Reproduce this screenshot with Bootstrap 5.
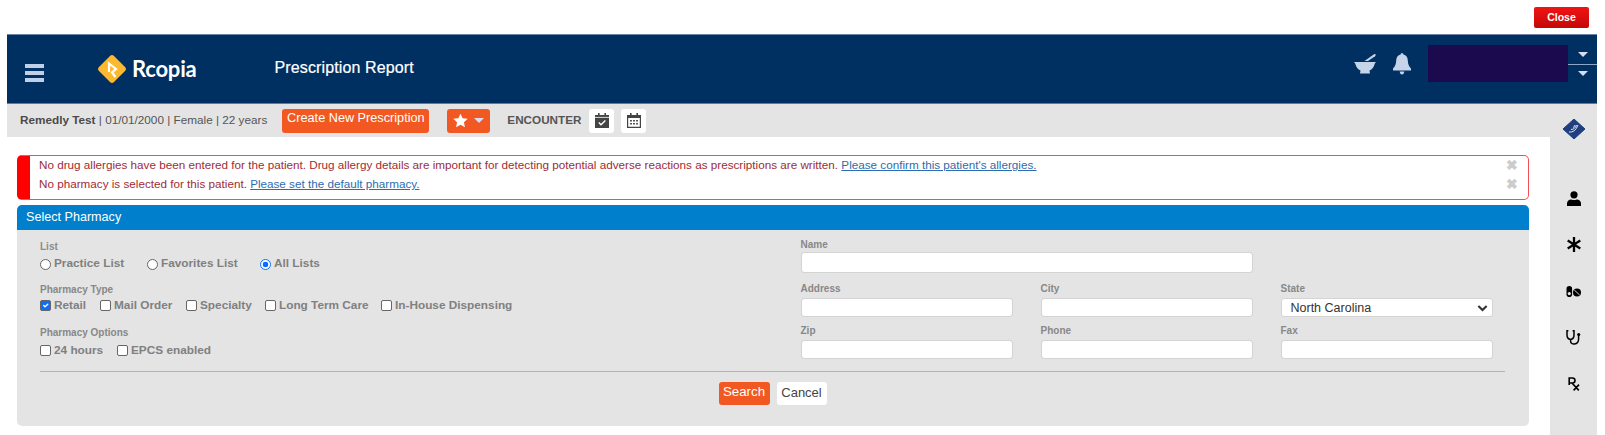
<!DOCTYPE html>
<html lang="en">
<head>
<meta charset="utf-8">
<title>Prescription Report</title>
<link href="https://cdn.jsdelivr.net/npm/bootstrap@5.3.0/dist/css/bootstrap.min.css" rel="stylesheet">
<style>
html,body{height:435px;overflow:hidden;background:#fff;font-family:"Liberation Sans",Arial,sans-serif;}
.shell{padding:0 8px 0 7px;}
.topstrip{height:34px;padding-right:8px;}
.closer{width:55px;height:21px;padding:0;font-size:10.5px;font-weight:700;color:#fff;border:0;border-radius:2px;background:linear-gradient(#f01414,#c40808);line-height:21px;}
.headbar{height:70px;background:#002f62;border-top:1px solid #6d86a8;border-bottom:1px solid #5f7a9e;}
.burger{width:19px;margin:7px 0 0 18px;}
.burger span{display:block;height:4px;margin-bottom:3px;background:#bfcfe8;}
.burger span:last-child{margin-bottom:0;}
.brand{margin:0 0 0 53px;gap:5px;}
.brandword{font-family:Lato,sans-serif;font-weight:700;font-size:22px;color:#fff;line-height:1;letter-spacing:-.2px;}
.reporttitle{margin:0 0 3px 78px;font-size:16px;color:#fff;font-weight:400;letter-spacing:.12px;-webkit-text-stroke:.2px #fff;}
.headtools{gap:17px;padding-bottom:11px;}
.redact{width:140px;height:37px;background:#1c0a4f;}
.userarrows{width:29px;height:37px;}
.userarrows div{height:20px;border-bottom:1px solid #8fa6c6;}
.userarrows div+div{border-bottom:0;height:17px;}
.downtri{width:0;height:0;border-left:5px solid transparent;border-right:5px solid transparent;border-top:5px solid #d4def0;}
.mainrow{height:331px;}
.sidecol{width:47px;background:#e4e4e4;padding-top:3px;}
.sideslot{height:46.5px;}
.sideslot.firstslot{height:68px;padding-bottom:24px;}
.toolstrip{height:33px;background:#e4e4e4;padding-left:13px;color:#555;font-size:11.75px;gap:0;}
.toolstrip>span{padding-bottom:2px;}
.toolstrip b{color:#4a4a4a;}
.orangebtn{background:#f25822;color:#fff;border:0;border-radius:3px;font-size:12.7px;line-height:1;padding:0;height:24px;}
.orangebtn:hover{background:#f25822;color:#fff;}
.newrx{width:147px;margin-left:15px;padding-bottom:4px;}
.starbtn{width:43px;margin-left:18px;gap:6px;}
.encword{font-weight:700;color:#555;margin:0 8px 0 17px;font-size:11.7px;}
.calbtn{width:25px;height:24px;background:#fff;border-radius:3px;margin-right:7px;}
.pagebody{padding:18px 21px 0 10px;}
.warnbox{height:45px;margin:0 0 5px;padding:0;border:1px solid #f44b55;border-left:13px solid #f00;border-radius:5px;background:#fff;color:#a02c36;font-size:11.7px;}
.warnline{height:19px;padding:0 10px 1px 9px;}
.warnline a{color:#2d6cb0;}
.warnx{color:#ccc;font-size:14px;font-weight:700;line-height:1;}
.panelcard{height:221px;border:0;border-radius:5px;background:#e4e4e4;}
.panelhead{height:25px;padding:0 9px;background:#0080cc;border:0;color:#fff;font-size:12.6px;line-height:25px;border-radius:5px 5px 0 0!important;}
.panelbody{padding:8px 24px 0 23px;}
.formsplit{display:grid;grid-template-columns:760.5px 1fr;height:126px;}
.grouptitle{display:block;height:14px;line-height:14px;margin:0 0 2px;font-size:10px;font-weight:700;color:#888;}
.grouptitle.listt{margin-top:2px;color:#8c8c8c;}
.grouptitle.typet{margin-bottom:1px;}
.grouptitle.optt{margin-bottom:3px;}
.optrow{height:16px;margin-bottom:11px;}
.optrow.typerow{margin-bottom:12px;}
.optitem{display:flex;align-items:center;margin:0;font-size:11.8px;font-weight:700;color:#808080;}
.optitem .form-check-input{width:11px;height:11px;margin:0 3px 0 0;border:1px solid #666;flex:none;}
.optitem .form-check-input[type=checkbox]{border-radius:2px;margin-bottom:2px;}
.optitem .form-check-input[type=radio]:checked{border-color:#0d6efd;background-color:#fff;background-image:radial-gradient(circle,#0d6efd 0 2.6px,#fff 3.1px);}
.rightgrid{display:grid;grid-template-columns:repeat(3,212px);column-gap:28px;}
.fieldspan{grid-column:span 2;}
.fieldname{height:36px;margin-bottom:8px;}
.fieldaddr{height:36px;margin-bottom:6px;}
.fieldtitle{display:block;height:14px;line-height:14px;margin:0;font-size:10px;font-weight:700;color:#888;}
.fieldaddr .fieldtitle,.fieldzip .fieldtitle{margin-bottom:2px;}
.tallinput{height:21px;min-height:0;padding:0 8px;border:1px solid #d4d4d4;border-radius:3px;font-size:12px;}
.shortinput{height:19px;min-height:0;padding:0 9px;border:1px solid #d4d4d4;border-radius:3px;font-size:12.5px;color:#333;}
select.shortinput{background-size:11px 8px;background-position:right 4px center;background-image:url("data:image/svg+xml,%3csvg xmlns='http://www.w3.org/2000/svg' viewBox='0 0 16 10'%3e%3cpath fill='none' stroke='%23333' stroke-width='3' d='M2 2l6 6 6-6'/%3e%3c/svg%3e");}
.formrule{margin:7px 0 10px;border:0;border-top:1px solid #b4b4b4;opacity:1;}
.searchbtn{width:51px;height:23px;font-size:13.3px;padding-bottom:3px;}
.cancelbtn{width:50px;height:23px;padding:0 0 3px;margin-left:7px;background:#fff;color:#444;border:0;border-radius:3px;font-size:13px;line-height:1;}
</style>
</head>
<body>
<div class="shell">
  <div class="topstrip d-flex justify-content-end align-items-center">
    <button type="button" class="btn closer">Close</button>
  </div>

  <nav class="headbar d-flex align-items-center">
    <div class="burger"><span></span><span></span><span></span></div>
    <div class="brand d-flex align-items-center">
      <svg width="30" height="30" viewBox="0 0 30 30" aria-hidden="true">
        <path d="M15 1 Q16 1 17 2 L28 13 Q30 15 28 17 L17 28 Q15 30 13 28 L2 17 Q0 15 2 13 L13 2 Q14 1 15 1Z" fill="#fdb92e"/>
        <path d="M12 18 V9.5 L19 15 L15 18.5 L18.5 23" fill="none" stroke="#fff" stroke-width="2.2" stroke-linejoin="miter"/>
      </svg>
      <span class="brandword">Rcopia</span>
    </div>
    <div class="reporttitle">Prescription Report</div>
    <div class="headtools d-flex align-items-center ms-auto">
      <svg width="22" height="22" viewBox="0 0 22 22" aria-hidden="true" fill="#c6d4ea">
        <path d="M0 9 H22 L20.8 10.6 Q19.5 16 15.5 17.5 L16 20.5 H6 L6.5 17.5 Q2.5 16 1.2 10.6Z"/>
        <path d="M10.5 8 L20 1.2 Q21.5 .6 21.7 1.8 Q21.8 2.6 21 3.2 L14 8Z"/>
      </svg>
      <svg width="18" height="22" viewBox="0 0 18 22" aria-hidden="true" fill="#c6d4ea">
        <path d="M9 0 Q10.4 0 10.4 1.6 Q14.6 2.6 14.8 7.5 Q15 13 18 15.6 V17.4 H0 V15.6 Q3 13 3.2 7.5 Q3.4 2.6 7.6 1.6 Q7.6 0 9 0Z"/>
        <path d="M6.6 18.6 H11.4 Q11 21.5 9 21.5 Q7 21.5 6.6 18.6Z"/>
      </svg>
      <div class="d-flex align-items-center">
        <div class="redact"></div>
        <div class="userarrows">
          <div class="d-flex align-items-center justify-content-center"><span class="downtri"></span></div>
          <div class="d-flex align-items-center justify-content-center"><span class="downtri"></span></div>
        </div>
      </div>
    </div>
  </nav>

  <div class="mainrow d-flex">
    <div class="flex-grow-1">
      <div class="toolstrip d-flex align-items-center">
        <span><b>Remedly Test</b> | 01/01/2000 | Female | 22 years</span>
        <button type="button" class="btn orangebtn newrx">Create New Prescription</button>
        <button type="button" class="btn orangebtn starbtn d-flex align-items-center justify-content-center">
          <svg width="15" height="15" viewBox="0 0 24 24" aria-hidden="true" fill="#fff"><path d="M12 1 L15.4 8.4 L23.5 9.3 L17.5 14.8 L19.1 22.8 L12 18.8 L4.9 22.8 L6.5 14.8 L.5 9.3 L8.6 8.4Z"/></svg>
          <i class="downtri"></i>
        </button>
        <span class="encword">ENCOUNTER</span>
        <div class="calbtn d-flex align-items-center justify-content-center">
          <svg width="14" height="15" viewBox="0 0 14 15" aria-hidden="true">
            <path d="M3 0h1.6v2H3zM9.4 0H11v2H9.4z" fill="#444"/>
            <path d="M0 2 H14 V15 H0Z" fill="#444"/>
            <path d="M0 4.4 H14" stroke="#fff" stroke-width=".8"/>
            <path d="M3.8 9.5 L6 11.8 L10.4 7.4" fill="none" stroke="#fff" stroke-width="1.4"/>
          </svg>
        </div>
        <div class="calbtn d-flex align-items-center justify-content-center">
          <svg width="14" height="15" viewBox="0 0 14 15" aria-hidden="true">
            <path d="M3 0h1.6v2H3zM9.4 0H11v2H9.4z" fill="#444"/>
            <path d="M.6 2.6 H13.4 V14.4 H.6Z" fill="#fff" stroke="#444" stroke-width="1.2"/>
            <path d="M0 2 H14 V5 H0Z" fill="#444"/>
            <path d="M3 7h2v1.6H3zM6 7h2v1.6H6zM9 7h2v1.6H9zM3 10h2v1.6H3zM6 10h2v1.6H6zM9 10h2v1.6H9z" fill="#555"/>
          </svg>
        </div>
      </div>

      <div class="pagebody">
        <div class="alert warnbox" role="alert">
          <div class="warnline d-flex align-items-center justify-content-between">
            <span>No drug allergies have been entered for the patient. Drug allergy details are important for detecting potential adverse reactions as prescriptions are written. <a href="#">Please confirm this patient's allergies.</a></span>
            <span class="warnx">✖</span>
          </div>
          <div class="warnline d-flex align-items-center justify-content-between">
            <span>No pharmacy is selected for this patient. <a href="#">Please set the default pharmacy.</a></span>
            <span class="warnx">✖</span>
          </div>
        </div>

        <div class="card panelcard">
          <div class="card-header panelhead">Select Pharmacy</div>
          <div class="panelbody">
            <form>
              <div class="formsplit">
                <div>
                  <label class="grouptitle listt">List</label>
                  <div class="optrow d-flex align-items-center">
                    <label class="optitem" style="width:107px"><input class="form-check-input" type="radio" name="lst">Practice List</label>
                    <label class="optitem" style="width:113px"><input class="form-check-input" type="radio" name="lst">Favorites List</label>
                    <label class="optitem"><input class="form-check-input" type="radio" name="lst" checked>All Lists</label>
                  </div>
                  <label class="grouptitle typet">Pharmacy Type</label>
                  <div class="optrow typerow d-flex align-items-center">
                    <label class="optitem" style="width:60px"><input class="form-check-input" type="checkbox" checked>Retail</label>
                    <label class="optitem" style="width:86px"><input class="form-check-input" type="checkbox">Mail Order</label>
                    <label class="optitem" style="width:79px"><input class="form-check-input" type="checkbox">Specialty</label>
                    <label class="optitem" style="width:116px"><input class="form-check-input" type="checkbox">Long Term Care</label>
                    <label class="optitem"><input class="form-check-input" type="checkbox">In-House Dispensing</label>
                  </div>
                  <label class="grouptitle optt">Pharmacy Options</label>
                  <div class="optrow d-flex align-items-center">
                    <label class="optitem" style="width:77px"><input class="form-check-input" type="checkbox">24 hours</label>
                    <label class="optitem"><input class="form-check-input" type="checkbox">EPCS enabled</label>
                  </div>
                </div>
                <div class="rightgrid align-content-start">
                  <div class="fieldspan fieldname"><label class="fieldtitle">Name</label><input class="form-control tallinput" type="text"></div>
                  <div class="fieldname"></div>
                  <div class="fieldaddr"><label class="fieldtitle">Address</label><input class="form-control shortinput" type="text"></div>
                  <div class="fieldaddr"><label class="fieldtitle">City</label><input class="form-control shortinput" type="text"></div>
                  <div class="fieldaddr"><label class="fieldtitle">State</label>
                    <select class="form-select shortinput"><option>North Carolina</option></select></div>
                  <div class="fieldzip"><label class="fieldtitle">Zip</label><input class="form-control shortinput" type="text"></div>
                  <div class="fieldzip"><label class="fieldtitle">Phone</label><input class="form-control shortinput" type="text"></div>
                  <div class="fieldzip"><label class="fieldtitle">Fax</label><input class="form-control shortinput" type="text"></div>
                </div>
              </div>
              <hr class="formrule">
              <div class="d-flex justify-content-center">
                <button type="button" class="btn orangebtn searchbtn">Search</button>
                <button type="button" class="btn cancelbtn">Cancel</button>
              </div>
            </form>
          </div>
        </div>
      </div>
    </div>

    <aside class="sidecol d-flex flex-column align-items-center">
      <div class="sideslot firstslot d-flex align-items-center justify-content-center">
        <svg width="22" height="20" viewBox="0 0 22 20" aria-hidden="true">
          <path d="M11 0 L22 10 L11 20 L0 10Z" fill="#1f3f80" stroke="#1f3f80" stroke-linejoin="round"/>
          <path d="M6 13 Q12 14 15 6 M8 10.5 Q12 10.5 13.5 6 M10 8.5 Q11.5 8 12 6" fill="none" stroke="#dfe6f2" stroke-width="1"/>
        </svg>
      </div>
      <div class="sideslot d-flex align-items-center justify-content-center">
        <svg width="14" height="15" viewBox="0 0 14 15" aria-hidden="true"><circle cx="7" cy="3.8" r="3.6"/><path d="M0 15 V12.6 Q0 8.6 4.4 8.4 Q7 9.4 9.6 8.4 Q14 8.6 14 12.6 V15Z"/></svg>
      </div>
      <div class="sideslot d-flex align-items-center justify-content-center">
        <svg width="14" height="15" viewBox="0 0 14 15" aria-hidden="true"><path d="M7 0 V15 M.7 3.6 L13.3 11.4 M13.3 3.6 L.7 11.4" stroke="#000" stroke-width="2.3" fill="none"/></svg>
      </div>
      <div class="sideslot d-flex align-items-center justify-content-center">
        <svg width="15" height="11" viewBox="0 0 15 11" aria-hidden="true">
          <rect x=".5" y="0" width="5.6" height="11" rx="2.8"/>
          <circle cx="3.3" cy="7.6" r="1.6" fill="#e4e4e4"/>
          <circle cx="11" cy="6.5" r="4"/>
          <path d="M8.3 4 L13.6 9" stroke="#e4e4e4" stroke-width=".9"/>
        </svg>
      </div>
      <div class="sideslot d-flex align-items-center justify-content-center">
        <svg width="15" height="15" viewBox="0 0 15 15" aria-hidden="true">
          <path d="M2.4 .8 H1 V5 Q1 9 4.6 9.5 Q8 9 8 5 V.8 H6.6 M4.6 9.5 V11.5 Q5 14.2 8.5 14 Q12.6 13.6 12.6 9 V6" fill="none" stroke="#000" stroke-width="1.5"/>
          <circle cx="12.7" cy="4.6" r="1.6"/>
        </svg>
      </div>
      <div class="sideslot d-flex align-items-center justify-content-center">
        <svg width="12" height="14" viewBox="0 0 12 14" aria-hidden="true">
          <path d="M1.2 8 V1 H4.5 Q7 1 7 3.6 Q7 6 4.5 6 H1.4 M4 6 L10.8 13.4 M11 7.6 L5.6 13.4" fill="none" stroke="#000" stroke-width="1.6"/>
        </svg>
      </div>
    </aside>
  </div>
</div>
</body>
</html>
